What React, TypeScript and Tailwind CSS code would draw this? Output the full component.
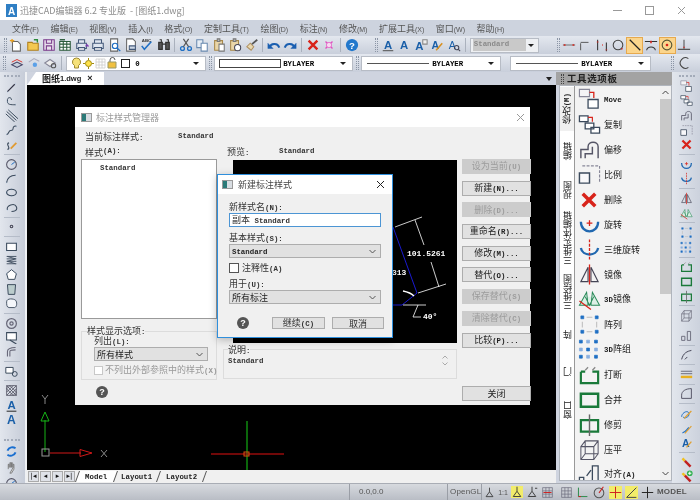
import React from "react";

const B = "#1f6fc4", R = "#d8231a", D = "#3b4a5c", G = "#1a7a3a";
const SANS = "font-['Liberation_Sans',sans-serif]";

function Tx({ s, sans }: { s: string; sans?: boolean }) {
  return (
    <>
      {s.split(/([\x00-\x7f]+)/).filter(Boolean).map((p, i) =>
        /^[\x00-\x7f]+$/.test(p) ? (
          <span key={i} className={sans ? "font-['Liberation_Sans',sans-serif] text-[7px]" : "font-['Liberation_Mono',monospace] text-[7.4px] font-bold whitespace-pre"}>{p}</span>
        ) : (
          <span key={i} className="font-['Noto_Sans_CJK_SC',sans-serif] text-[9px]">{p}</span>
        )
      )}
    </>
  );
}

function S({ size = 15, children }: { size?: number; children: React.ReactNode }) {
  return (
    <svg width={size} height={size} viewBox="0 0 16 16" fill="none" strokeWidth={1.2} className="shrink-0">
      {children}
    </svg>
  );
}
const P = ({ d, c = D, f = "none", w = 1.2, dash }: { d: string; c?: string; f?: string; w?: number; dash?: string }) => <path d={d} stroke={c} fill={f} strokeWidth={w} strokeDasharray={dash} />;
const AT = ({ x = 8, y = 13, s = 13, b = true }: { x?: number; y?: number; s?: number; b?: boolean }) => <text x={x} y={y} textAnchor="middle" fontSize={s} fill="#1a5fa8" fontWeight={b ? 700 : 400} fontFamily="Liberation Sans">A</text>;

const tb: Record<string, React.ReactNode> = {
  new: <><P d="M4 4h6l3 3v8H4z" c="#666" f="#fff" /><P d="M1 3h5M3.500 1v4" c="#e8a020" w={1.6} /></>,
  open: <><P d="M2 5h5l1 1h6v8H2z" c="#b08020" f="#f4c850" /><P d="M9 2l4 0v3" c="#2a8a3a" w={1.6} /></>,
  save: <><P d="M2 2h12v12H2z" c="#7a3a8a" f="#e8e0ec" /><P d="M5 2v4h6V2M5 14V9h6v5" c="#7a3a8a" /></>,
  table: <><P d="M2 4h12v10H2z" c="#2a5a3a" f="#fff" /><P d="M2 7h12M2 10.500h12M6 4v10M10 4v10" c="#2a5a3a" /><P d="M2 2h6" c="#2a5a3a" w={1.6} /></>,
  printp: <><P d="M4 2h7v4H4zM2 6h11v6H2z" c="#44597a" f="#dfe6f0" /><P d="M4 11h7v3H4z" c="#44597a" f="#fff" /><P d="M12 9h3l-2-2" c="#7a3ab0" w={1.4} /></>,
  print: <><P d="M4 2h8v4H4zM2 6h12v6H2z" c="#44597a" f="#dfe6f0" /><P d="M4 11h8v3H4z" c="#44597a" f="#fff" /></>,
  prev: <><P d="M3 1h8v14H3z" c="#666" f="#fff" /><circle cx="8" cy="9" r="3" stroke={B} strokeWidth="1.3" /><P d="M10 11l4 4" c={B} w={1.6} /></>,
  pub: <><P d="M3 1h7l3 3v11H3z" c="#666" f="#fff" /><P d="M6 9h7v4H6z" c="#44597a" f="#cdd8e6" /></>,
  abc: <><P d="M2 9l3 4 8-9" c={B} w={1.8} /><text x="2" y="5" fontSize="5" fill="#333" fontFamily="Liberation Sans" fontWeight="700">ABC</text></>,
  find: <><P d="M2 5h4v8H2zM10 5h4v8h-4zM6 7h4" c="#333" f="#555" w={1.4} /><P d="M3 2h2v3M11 2h2v3" c="#333" /></>,
  cut: <><circle cx="4" cy="12" r="2.200" stroke={B} strokeWidth="1.5" /><circle cx="12" cy="12" r="2.200" stroke={B} strokeWidth="1.500" /><P d="M5 10l6-9M11 10L5 1" c="#555" w={1.4} /></>,
  copy: <><P d="M2 2h7v9H2z" c="#6a8ab0" f="#e6edf5" /><P d="M7 6h7v9H7z" c="#6a8ab0" f="#fff" /></>,
  paste: <><P d="M3 3h9v11H3z" c="#a8884a" f="#ead6a8" /><P d="M6 1h3v3H6z" c="#777" f="#bbb" /><P d="M8 7h6v8H8z" c="#777" f="#fff" /></>,
  pastes: <><P d="M3 3h9v11H3z" c="#a8884a" f="#ead6a8" /><P d="M6 1h3v3H6z" c="#777" f="#bbb" /><circle cx="11" cy="11" r="3.500" fill="#fff" stroke="#445" /></>,
  brush: <><P d="M2 10l4-4 4 4-3 4z" c="#b09060" f="#e8d8b0" /><P d="M8 7l6-5" c="#555" w={2} /></>,
  undo: <><P d="M3 11c1-5 9-6 11 0" c="#1a5fb0" w={2.400} /><P d="M1 6v6h6z" c="#1a5fb0" f="#1a5fb0" w={.5} /></>,
  redo: <><P d="M13 11c-1-5-9-6-11 0" c="#1a5fb0" w={2.400} /><P d="M15 6v6H9z" c="#1a5fb0" f="#1a5fb0" w={.5} /></>,
  x: <P d="M3 3l10 10M13 3L3 13" c={R} w={2.800} />,
  xm: <><P d="M4 4l8 8M12 4l-8 8" c="#e050c0" w={1.6} /><circle cx="8" cy="8" r="3" fill="#f8d8f0" stroke="#e050c0" strokeWidth=".8" /></>,
  help: <><circle cx="8" cy="8" r="7" fill="#2278cc" /><text x="8" y="12" textAnchor="middle" fontSize="11" fill="#fff" fontWeight="700" fontFamily="Liberation Sans">?</text></>,
  a1: <><AT y={12} /><P d="M2 14.500h12" c="#555" /></>,
  a2: <AT />,
  a3: <><AT x={6} y={14} /><P d="M10 2h5v5h-5z" c="#888" f="#eee" /></>,
  a4: <><AT x={6} s={12} /><P d="M7 14l7-8" c="#d89020" w={1.8} /></>,
  a5: <><AT x={6} y={12} s={12} b={false} /><circle cx="11" cy="11" r="2.500" stroke="#445" /><P d="M13 13l2 2" c="#445" /></>,
  d1: <><P d="M1 8h14" c="#555" w={.9} /><P d="M2 8h2M12 8h2" c={R} w={1.600} /></>,
  d2: <P d="M3 14V6M3 5h9" c="#555" w={1.100} />,
  d3: <><P d="M3 2v12M13 5v10" c="#333" w={1.200} /><P d="M3 4v1M13 13v1M8 8h.8" c={R} w={1.800} /></>,
  d4: <><circle cx="8" cy="8" r="5.500" stroke="#444" strokeWidth="1.200" /><P d="M12 12l1 1" c={R} w={1.800} /></>,
  d5: <P d="M2 2l12 12" c="#222" w={1.400} />,
  d6: <><P d="M1 4h14M3 14c1-5 9-5 10 0" c="#333" /><P d="M8 3v3" c={R} w={1.800} /></>,
  d7: <><circle cx="8" cy="8" r="5.500" stroke="#553" strokeWidth="1.300" /><circle cx="8" cy="8" r="1.500" fill={R} /></>,
  d8: <><P d="M8 2v11M1 13h14" c="#555" /><P d="M8 10v1" c={R} w={1.800} /></>,
  l1: <><P d="M2 10l6-3 6 3-6 3z" c="#446" f="#c8d0dc" /><P d="M2 7l6-3 6 3" c={R} w={1} /></>,
  l2: <><P d="M2 7l6-4 6 3" c="#aab" /><circle cx="9" cy="10" r="2.500" fill="#5aa0e8" /></>,
  l3: <><P d="M2 8l6-4 6 4-6 4z" c="#889" f="#eee" /><circle cx="12" cy="11" r="2.500" stroke="#555" /></>,
  arc: <P d="M13 3a6 6 0 1 0 0 10" c="#444" w={1.200} />,
};

const lf: Record<string, React.ReactNode> = {
  line: <><P d="M3 13L12 4" c="#334" w={1.400} /><P d="M2.500 13.500h.1M12.500 3.500h.1" c={B} w={2.600} /></>,
  pl: <><P d="M3 8c-1-6 5-6 5-2M3 8c0 4 4 4 10 4" c={D} w={1.200} /><P d="M3 8h.1M13 12h.1" c={B} w={2.500} /></>,
  ml: <P d="M2 3l12 11M4 1l12 11M1 6l11 10" c={D} w={1.200} />,
  sp: <><P d="M2 13c3 0 2-5 5-5s3-1 3-3 3-3 4-2" c={D} w={1.300} /><P d="M2 13h.1M14 3h.1" c={B} w={2.400} /></>,
  skt: <><P d="M3 14c5-1-3-7 2-8" c={D} w={1.400} /><P d="M7 13l7-7" c="#e09a30" w={2.200} /></>,
  ci: <><circle cx="8" cy="8" r="6" stroke="#556" strokeWidth="1.300" /><P d="M8 8l4-3" c={B} w={1.200} /></>,
  ar: <><P d="M2 13c1-6 5-9 11-9" c={D} w={1.400} /><P d="M2 13h.1M13 4h.1" c={B} w={2.500} /></>,
  el: <><ellipse cx="8" cy="8" rx="6" ry="4" stroke={D} strokeWidth="1.400" /><P d="M8 4h.1M8 12h.1M2 8h.1" c={B} w={2.400} /></>,
  ea: <><P d="M3 11c-2-6 9-9 11-4s-3 6-6 6" c={D} w={1.300} /><P d="M3 11h.1" c={B} w={2.500} /></>,
  pt: <circle cx="8" cy="8" r="1.600" stroke="#445" strokeWidth="1.300" />,
  rc: <><P d="M2 4h12v9H2z" c={D} f="#fff" w={1.300} /><P d="M14 4h.1M2 13h.1" c={B} w={2.600} /></>,
  hl: <P d="M2 3h12M2 6h12M2 9h12M2 12h12M3 3l10 3M13 6L3 9M3 9l10 3" c={D} w={1.100} />,
  pg: <><P d="M8 2l6 5-2 7H4L2 7z" c={D} f="#fff" w={1.200} /><P d="M8 2h.1M14 7h.1M2 7h.1" c={B} w={2.400} /></>,
  hx: <P d="M3 2h10l-1 12H4z" c={D} f="#bcc" w={1.200} />,
  rg: <P d="M2 6c0-5 9-4 11-2s2 8-1 9H5C2 13 2 9 2 6z" c={D} f="#f4f6fa" w={1.100} />,
  dn: <><circle cx="8" cy="8" r="6" stroke="#667" strokeWidth="1.500" /><circle cx="8" cy="8" r="2" stroke="#667" strokeWidth="1.500" /></>,
  bx: <><P d="M2 2h12v9H2z" c={D} f="#fff" w={1.300} /><P d="M6 11l8 5" c={D} w={1.400} /></>,
  cv: <P d="M3 14V8c0-4 3-5 10-5M6 14V8c0-2 3-2 7-2" c="#667" w={1.300} />,
  vw: <><P d="M1 3h9v7H1z" c={D} f="#fff" /><circle cx="12" cy="11" r="3" stroke={D} /></>,
  ha: <P d="M2 2h12v12H2zM2 6l4-4M2 10l8-8M2 14L14 2M6 14l8-8M10 14l4-4M2 6l8 8M2 2l12 12M6 2l8 8" c="#445" w={.9} />,
  ta: <><AT y={12} s={14} /><P d="M2 15h12" c="#222" /></>,
  tb: <AT y={14} s={15} />,
  rf: <><P d="M3 7c2-5 7-5 10-3" c="#1a6fd0" w={2.400} /><P d="M13 9c-2 5-7 5-10 3" c="#1a6fd0" w={2.400} /></>,
  hd: <P d="M4 10V4h1v4M6 8V2h1v6M8 8V2h1v6M10 8V4h1v6l-3 5H6z" c="#666" f="#ddd" w={.9} />,
  re: <><P d="M1 1h7v5H1z" c="#889" f="#f4f4f6" w={.8} /><P d="M7 8h7v6H7z" c={D} f="#fff" w={.9} /><P d="M8 3h3v4" c={R} w={.9} /></>,
  co: <><P d="M1 2h6v4H1zM5 7h6v4H5zM9 10h6v4H9z" c={D} f="#fff" w={.9} /><P d="M7 3h3v3" c={R} w={.8} /></>,
  of: <P d="M2 14V8h5V6c0-4 7-4 7 0v8M5 14v-3h5V6" c="#556" w={1} />,
  sc: <><P d="M3 2h12v11" c="#889" w={.8} dash="2 1" /><P d="M1 7h7v7H1z" c={D} f="#f8f8fa" w={1} /></>,
  ro: <><P d="M2 6c0 9 12 9 12 0" c="#2068b0" w={1.600} /><P d="M8 5v4M6 7h4" c={R} w={.9} /></>,
  ro3: <><P d="M2 7c1 6 11 6 12 0" c="#2068b0" w={1.600} /><P d="M8 1v14" c={R} w={.9} dash="2 1" /></>,
  mi: <><P d="M7 3L2 13h5zM9 3l5 10H9z" c="#445" w={.8} /><P d="M8 1v14" c={R} w={.9} /></>,
  mi3: <><P d="M6 3L1 12h6zM10 3l5 9H9zM5 6l3 6 3-6" c="#2a8a5a" f="#dcefe5" w={.7} /><P d="M1 9l8 6" c={R} w={.9} /></>,
  aa: <><P d="M2 2h2v2H2zM12 2h2v2h-2zM2 12h2v2H2zM12 12h2v2h-2z" c={B} f={B} w={.5} /><P d="M6 3h4M3 6v4M13 6v4M6 13h4" c="#bbb" w={.7} /></>,
  a3d: <><P d="M1 1.500h2v2H1zM11.500 1.500h2v2h-2zM1 12h2v2H1zM11.500 12h2v2h-2zM6 7h2v2H6z" c={B} f={B} w={.5} /><P d="M6 1.500h2v2H6zM1 7h2v2H1zM11.500 7h2v2h-2zM6 12h2v2H6z" c="#8ab0e0" f="#8ab0e0" w={.5} /></>,
  br: <><P d="M2 6h3M10 6h4v8H2V6" c={G} w={1.500} /><P d="M5 5l2-2M10 5l2-2" c="#888" w={.9} /></>,
  jo: <P d="M2 4h12v9H2z" c={G} w={1.700} />,
  tr: <><P d="M2 5h12v8H2z" c={G} w={1.500} /><P d="M8 1v15" c="#666" w={1} /></>,
  ex: <P d="M2 6h9v9H2zM5 2h9v9H5zM2 6l3-4M11 6l3-4M2 15l3-4M11 15l3-4" c="#556" w={.7} />,
  da: <P d="M1 15v-5h3v5M10 15V2h4v13M6 9l3-4" c={D} w={.9} />,
  sl: <P d="M2 14V9h4v5zM9 14V3h4v11z" c="#667" w={1.100} />,
  fl: <P d="M2 14c2-8 7-10 12-11M6 14l3-3" c="#445" />,
  rl: <><P d="M1 4h14M1 7h14" c="#556" w={1} /><P d="M1 11h14" c="#e8b020" w={3} /></>,
  ar2: <P d="M2 14V10c0-5 5-8 12-8v12z" c="#556" w={1.200} />,
  ed1: <><P d="M2 12c0-5 8-9 9-4s-7 7-7 4" c={B} /><P d="M5 14L14 5" c="#e0a030" w={1.600} /></>,
  ed2: <><P d="M3 13c3 1 6-5 8-6" c={B} w={1.600} /><P d="M6 14l8-9" c="#e0a030" w={1.400} /></>,
  ed3: <><AT x={7} /><P d="M8 14l6-7" c="#e0a030" w={1.600} /></>,
  pe1: <><P d="M3 3l3 3" c="#f0c020" w={3} /><P d="M6 6l7 7" c="#c02020" w={3} /></>,
  pe2: <><P d="M3 4l3 3" c="#f0c020" w={3} /><P d="M6 7l7 7" c="#c02020" w={3} /><circle cx="12" cy="4" r="3.500" fill="#30b050" /><P d="M10 4h4M12 2v4" c="#fff" /></>,
  x: tb.x,
};

const Sep = () => <div className="h-[5px] flex items-center justify-center shrink-0"><div className="w-4 h-px bg-[#b5bcc8]" /></div>;
const VSep = ({ w = 6 }: { w?: number }) => <div style={{ width: w }} className="h-full flex items-center justify-center shrink-0"><div className="w-px h-3.5 bg-[#aab1bd]" /></div>;
const Grip = () => <div className="w-[3px] h-3.5 border-x border-dotted border-[#8b95a5] shrink-0" />;
const HGrip = () => <div className="h-[2px] w-4 mx-auto border-t-2 border-dotted border-[#a3abb9] shrink-0" />;

function Tb({ k, active }: { k: string; active?: boolean }) {
  return (
    <div className={"w-[16.4px] h-[17px] flex items-center justify-center shrink-0 " + (active ? "bg-[#fbd58c] border border-[#e6a94e]" : "")}>
      <S size={14}>{tb[k]}</S>
    </div>
  );
}

function VIcons({ items, h = 14.4, size = 13 }: { items: string[]; h?: number; size?: number }) {
  return (
    <>
      {items.map((k, i) =>
        k === "-" ? <Sep key={i} /> : k === "+" ? <div key={i} className="h-[5px] shrink-0" /> : (
          <div key={i} style={{ height: h }} className="flex items-center justify-center shrink-0">
            <S size={size}>{lf[k]}</S>
          </div>
        )
      )}
    </>
  );
}

function Combo({ w, children }: { w: string; children: React.ReactNode }) {
  return (
    <div className={w + " h-[15px] bg-white border border-[#b7bcc5] flex items-center px-1 shrink-0"}>
      <div className="flex-1 flex items-center min-w-0 overflow-hidden">{children}</div>
      <div className="w-0 h-0 border-x-[3px] border-x-transparent border-t-[3px] border-t-[#222] mr-[2px]" />
    </div>
  );
}

function LineCombo({ w }: { w: string }) {
  return (
    <Combo w={w}>
      <div className="w-[62px] h-px bg-[#555] mx-[1px] shrink-0" />
      <span className="ml-[2px]"><Tx s="BYLAYER" /></span>
    </Combo>
  );
}

const menu: [string, string][] = [["文件", "(F)"], ["编辑", "(E)"], ["视图", "(V)"], ["插入", "(I)"], ["格式", "(O)"], ["定制工具", "(T)"], ["绘图", "(D)"], ["标注", "(N)"], ["修改", "(M)"], ["扩展工具", "(X)"], ["窗口", "(W)"], ["帮助", "(H)"]];

function Btn({ label, dis }: { label: string; dis?: boolean }) {
  return (
    <div className={"w-[69px] h-[15px] flex items-center justify-center border shrink-0 " + (dis ? "bg-[#cccccc] border-[#cccccc] text-[#9c9c9c]" : "bg-[#e1e1e1] border-[#adadad] text-[#222]")}>
      <span><Tx s={label} /></span>
    </div>
  );
}

function Select({ text, w }: { text: string; w: string }) {
  return (
    <div className={w + " h-[14px] bg-[#e1e1e1] border border-[#adadad] flex items-center justify-between pl-[2px] pr-1 text-[#222] shrink-0"}>
      <span><Tx s={text} /></span>
      <svg width="7" height="5" viewBox="0 0 7 5"><path d="M.5 1l3 3 3-3" stroke="#555" fill="none" /></svg>
    </div>
  );
}

const DlgIcon = () => (
  <div className="w-[11px] h-[9px] border border-[#999] bg-[#d8dde2] flex shrink-0">
    <div className="w-[4px] h-full bg-[#2b7a78]" />
  </div>
);

const Help = () => (
  <div className={"w-3 h-3 rounded-full bg-[#555] text-white flex items-center justify-center font-bold text-[9px] " + SANS}>?</div>
);

function Preview() {
  return (
    <svg viewBox="233 160 224 183" className="w-[224px] h-[183px] bg-black shrink-0">
      <path d="M393 227L417 293M417 293L402 305H233" stroke="#1a1ad0" fill="none" strokeWidth="1" />
      <path d="M395 227L422 217M418 293L446 284M415 220L424 245M431 262L439 287M403 305H426M418 305L413 317H421" stroke="#fff" fill="none" strokeWidth=".8" />
      <path d="M403 291c5 1 8 2 11 5" stroke="#fff" fill="none" strokeWidth="1.400" />
      <text x="407" y="256" fill="#fff" fontSize="8" fontFamily="Liberation Mono" fontWeight="700">101.5261</text>
      <text x="392" y="275" fill="#fff" fontSize="8" fontFamily="Liberation Mono" fontWeight="700">313</text>
      <text x="423" y="319" fill="#fff" fontSize="8" fontFamily="Liberation Mono" fontWeight="700">40°</text>
    </svg>
  );
}

function ManagerDialog() {
  return (
    <div className="absolute left-[48px] top-[22px] w-[455px] h-[298px] bg-[#f0f0f0] flex flex-col text-[#333]">
      <div className="h-5 bg-white flex items-center pl-[6px] pr-[3px] shrink-0">
        <DlgIcon />
        <span className="ml-[4px] text-[#999]"><Tx s="标注样式管理器" /></span>
        <span className="ml-auto mr-[2px]"><svg width="9" height="9" viewBox="0 0 9 9"><path d="M1 1l7 7M8 1L1 8" stroke="#999" /></svg></span>
      </div>
      <div className="flex-1 flex pl-[6px] min-h-0">
        <div className="w-[136px] flex flex-col shrink-0">
          <div className="h-[10px] mt-[5px] pl-1 flex items-center shrink-0"><span className="w-[93px]"><Tx s="当前标注样式:" /></span><Tx s="Standard" /></div>
          <div className="h-[10px] mt-[5px] pl-1 flex items-center shrink-0"><Tx s="样式(A):" /></div>
          <div className="h-[160px] mt-[2px] bg-white border border-[#9a9a9a] pl-[18px] pt-[2px] shrink-0"><Tx s="Standard" /></div>
          <div className="relative mt-[12px] h-[49px] border border-[#dcdcdc] pl-3 pt-[4px] shrink-0">
            <span className="absolute -top-[6px] left-[5px] bg-[#f0f0f0]"><Tx s="样式显示选项:" /></span>
            <div className="h-[11px]"><Tx s="列出(L):" /></div>
            <Select text="所有样式" w="w-[114px]" />
            <div className="flex items-center gap-[2px] mt-[4px] text-[#999] whitespace-nowrap"><div className="w-[9px] h-[9px] bg-white border border-[#c8c8c8] shrink-0" /><span><Tx s="不列出外部参照中的样式(X)" /></span></div>
          </div>
          <div className="pl-[15px] mt-[6px]"><Help /></div>
        </div>
        <div className="w-[234px] ml-[6px] flex flex-col shrink-0">
          <div className="h-[10px] mt-[20px] pl-1 flex items-center shrink-0"><span className="w-[52px]"><Tx s="预览:" /></span><Tx s="Standard" /></div>
          <div className="pl-[10px] mt-[3px]"><Preview /></div>
          <div className="relative mt-[6px] h-[30px] border border-[#dcdcdc] pl-1 pt-[3px]">
            <span className="absolute -top-[5px] left-1 bg-[#f0f0f0]"><Tx s="说明:" /></span>
            <div className="mt-[2px]"><Tx s="Standard" /></div>
            <div className="absolute right-[8px] top-[5px] flex flex-col gap-[3px]">
              <svg width="6" height="4" viewBox="0 0 6 4"><path d="M.5 3.500L3 1l2.500 2.500" stroke="#aaa" fill="none" /></svg>
              <svg width="6" height="4" viewBox="0 0 6 4"><path d="M.5.5L3 3 5.500.5" stroke="#aaa" fill="none" /></svg>
            </div>
          </div>
        </div>
        <div className="w-[69px] ml-[5px] pt-[32px] flex flex-col shrink-0 gap-[6.700px]">
          <Btn label="设为当前(U)" dis />
          <Btn label="新建(N)..." />
          <Btn label="删除(D)..." dis />
          <Btn label="重命名(R)..." />
          <Btn label="修改(M)..." />
          <Btn label="替代(O)..." />
          <Btn label="保存替代(S)" dis />
          <Btn label="清除替代(C)" dis />
          <Btn label="比较(P)..." />
          <div className="mt-[32px]"><Btn label="关闭" /></div>
        </div>
      </div>
    </div>
  );
}

function NewDialog() {
  return (
    <div className="absolute left-[190px] top-[89px] w-[176px] h-[164px] bg-[#f0f0f0] border border-[#2f8fdc] flex flex-col text-[#333] shadow-[0_2px_8px_rgba(0,0,0,0.25)]">
      <div className="h-[19px] bg-white flex items-center pl-1 pr-[7px] shrink-0">
        <DlgIcon />
        <span className="ml-[5px] text-[#444]"><Tx s="新建标注样式" /></span>
        <svg className="ml-auto" width="9" height="9" viewBox="0 0 9 9"><path d="M1 1l7 7M8 1L1 8" stroke="#222" /></svg>
      </div>
      <div className="flex-1 flex flex-col px-[11px] pt-[8px] relative">
        <div className="h-[11px]"><Tx s="新样式名(N):" /></div>
        <div className="h-[14px] bg-white border border-[#4c95d4] flex items-center px-[2px] shrink-0"><span><Tx s="副本 Standard" /></span></div>
        <div className="h-[11px] mt-[6px]"><Tx s="基本样式(S):" /></div>
        <Select text="Standard" w="w-full" />
        <div className="flex items-center gap-[3px] mt-[5px] h-[10px]"><div className="w-[10px] h-[10px] bg-white border border-[#555]" /><span><Tx s="注释性(A)" /></span></div>
        <div className="h-[11px] mt-[6px]"><Tx s="用于(U):" /></div>
        <Select text="所有标注" w="w-full" />
        <div className="flex items-center mt-[13px]">
          <div className="ml-[8px]"><Help /></div>
          <div className="ml-[23px] w-[53px] h-[12px] bg-[#e1e1e1] border border-[#adadad] flex items-center justify-center shrink-0"><span><Tx s="继续(C)" /></span></div>
          <div className="ml-[7px] w-[52px] h-[12px] bg-[#e1e1e1] border border-[#adadad] flex items-center justify-center -mr-[5px] shrink-0"><span><Tx s="取消" /></span></div>
        </div>
      </div>
    </div>
  );
}

const palette: [string, string][] = [["re", "Move"], ["co", "复制"], ["of", "偏移"], ["sc", "比例"], ["x", "删除"], ["ro", "旋转"], ["ro3", "三维旋转"], ["mi", "镜像"], ["mi3", "3D镜像"], ["aa", "阵列"], ["a3d", "3D阵组"], ["br", "打断"], ["jo", "合并"], ["tr", "修剪"], ["ex", "压平"], ["da", "对齐(A)"]];
const vtabs: [string, string][] = [["修改(M)", "h-[44px] bg-[#f0f0f0]"], ["编辑", "h-[40px]"], ["视图", "h-[37px]"], ["三维实体编辑", "h-[60px]"], ["三维绘图", "h-[48px]"], ["阵", "h-[36px]"], ["门", "h-[38px]"], ["窗口", "h-[40px]"]];

export default function App() {
  return (
    <div className="w-[700px] h-[500px] flex flex-col bg-[#cfd4df] overflow-hidden text-[9px] leading-none font-['Noto_Sans_CJK_SC',sans-serif] blur-[0.35px]">
      {/* Title */}
      <div className="h-5 bg-white flex items-center shrink-0 pl-[6px]">
        <div className={"w-[11px] h-[13px] bg-[#2f7fc4] text-white font-bold text-[10px] flex items-end justify-center " + SANS}>A</div>
        <span className="ml-[3px] text-[9px] text-[#8c8c8c] whitespace-pre">迅捷CAD编辑器 6.2 专业版  - [图纸1.dwg]</span>
        <div className="ml-auto flex items-center gap-[23px] pr-[14px]">
          <div className="w-[9px] h-px bg-[#999]" />
          <div className="w-[9px] h-[9px] border border-[#999]" />
          <svg width="9" height="9" viewBox="0 0 9 9"><path d="M1 1l7 7M8 1L1 8" stroke="#999" /></svg>
        </div>
      </div>
      {/* Menu */}
      <div className="h-[16px] bg-[#cdd3de] flex items-center pl-[12px] gap-[11.500px] text-[#555] shrink-0">
        {menu.map(([a, b]) => <span key={a} className="whitespace-pre"><Tx s={a} /><Tx s={b} sans /></span>)}
      </div>
      {/* Toolbar 1 */}
      <div className="h-[18px] bg-gradient-to-b from-[#e4e8ef] to-[#c9cfdb] flex items-center pl-[4px] shrink-0">
        <Grip />
        <div className="w-[1px] shrink-0" />
        {["new", "open", "save", "table", "printp", "print", "prev", "pub", "abc", "find"].map(k => <Tb key={k} k={k} />)}
        <VSep />
        {["cut", "copy", "paste", "pastes", "brush"].map(k => <Tb key={k} k={k} />)}
        <VSep />
        {["undo", "redo"].map(k => <Tb key={k} k={k} />)}
        <VSep />
        {["x", "xm"].map(k => <Tb key={k} k={k} />)}
        <VSep />
        <Tb k="help" />
        <div className="w-[15px] shrink-0" />
        <Grip />
        <div className="w-[2px] shrink-0" />
        {["a1", "a2", "a3", "a4", "a5"].map(k => <Tb key={k} k={k} />)}
        <VSep w={8} />
        <div className="w-[69px] h-[15px] bg-[#eef0f3] border border-[#b7bcc5] flex items-center pl-[2px] pr-1 shrink-0">
          <div className="w-[53px] h-[12px] bg-[#c9c9c9] text-[#8a8a8a] flex items-center pl-[1px]"><Tx s="Standard" /></div>
          <div className="ml-auto w-0 h-0 border-x-[3px] border-x-transparent border-t-[3px] border-t-[#222]" />
        </div>
        <div className="w-[18px] shrink-0" />
        <Grip />
        <div className="w-[1px] shrink-0" />
        {["d1", "d2", "d3", "d4"].map(k => <Tb key={k} k={k} />)}
        <Tb k="d5" active />
        <Tb k="d6" />
        <Tb k="d7" active />
        <Tb k="d8" />
      </div>
      {/* Toolbar 2 */}
      <div className="h-[18px] bg-gradient-to-b from-[#e4e8ef] to-[#c9cfdb] flex items-center pl-[3px] shrink-0">
        <Grip />
        <div className="w-[3px] shrink-0" />
        {["l1", "l2", "l3"].map(k => <Tb key={k} k={k} />)}
        <VSep w={7} />
        <Combo w="w-[140px] ml-[1px]">
          <span className="flex items-center gap-[1px]">
            <svg width="11" height="13" viewBox="0 0 11 13"><path d="M5.500 1a4 4 0 0 1 2 7.500V11h-4V8.500A4 4 0 0 1 5.500 1z" fill="#f6e27a" stroke="#a08a30" /></svg>
            <svg width="11" height="11" viewBox="0 0 11 11"><circle cx="5.500" cy="5.500" r="3" fill="#ffe24a" stroke="#a08a10" /><path d="M5.500 0v2M5.500 9v2M0 5.500h2M9 5.500h2" stroke="#a08a10" /></svg>
            <svg width="11" height="11" viewBox="0 0 11 11"><path d="M1 1h9v9H1zM1 4h9M1 7h9M4 1v9M7 1v9" stroke="#ccc" fill="none" strokeWidth=".8" /></svg>
            <svg width="11" height="12" viewBox="0 0 11 12"><path d="M3 5V3a2.500 2.500 0 0 1 5 0" stroke="#555" fill="none" /><path d="M1 5h8v6H1z" fill="#f0c040" stroke="#996" /></svg>
            <div className="w-[9px] h-[9px] bg-white border border-[#222] ml-[2px]" />
            <span className="ml-[4px]"><Tx s="0" /></span>
          </span>
        </Combo>
        <div className="w-[3px] shrink-0" /><Grip /><div className="w-[2px] shrink-0" />
        <Combo w="w-[139px]">
          <div className="w-[62px] h-[9px] bg-white border border-[#444] shrink-0" />
          <span className="ml-[2px]"><Tx s="BYLAYER" /></span>
        </Combo>
        <div className="w-[3px] shrink-0" /><Grip /><div className="w-[2px] shrink-0" />
        <LineCombo w="w-[140px]" />
        <div className="w-[9px] shrink-0" />
        <LineCombo w="w-[141px]" />
        <div className="w-[20px] shrink-0" />
        <Grip />
        <div className="w-[2px] shrink-0" />
        <Tb k="arc" />
      </div>
      {/* Body */}
      <div className="flex-1 flex min-h-0">
        {/* Left toolbar */}
        <div className="w-[27px] shrink-0 flex flex-col pr-[2px] pt-[3px] bg-gradient-to-r from-[#e2e6ed] to-[#c6ccd8] border-r-2 border-r-[#eef0f3] overflow-hidden">
          <HGrip />
          <div className="h-[3px] shrink-0" />
          <VIcons items={["line", "pl", "ml", "sp", "skt", "-", "ci", "ar", "el", "ea", "-", "pt", "-", "rc", "hl", "pg", "hx", "rg", "-", "dn", "bx", "cv", "-", "vw", "-", "ha", "ta", "tb"]} />
          <div className="h-[12px] shrink-0" />
          <HGrip />
          <div className="h-[3px] shrink-0" />
          <VIcons items={["rf", "hd", "ci"]} h={16} />
        </div>
        {/* Center */}
        <div className="w-[529px] shrink-0 flex flex-col">
          <div className="h-[13px] flex items-end shrink-0 bg-[#cfd4df]">
            <svg width="9" height="13" viewBox="0 0 9 13" className="shrink-0"><path d="M0 13L9 0V13z" fill="#fff" /></svg>
            <div className="w-[68px] h-[13px] bg-white flex items-center pl-[6px] text-[#222]">
              <span className="text-[9px] font-bold">图纸</span>
              <span className={"text-[7.500px] font-bold " + SANS}>1.dwg</span>
              <span className={"ml-[6px] font-bold text-[9px] " + SANS}>×</span>
            </div>
            <div className="ml-auto mr-[4px] mb-[4px] w-0 h-0 border-x-[3.500px] border-x-transparent border-t-[4px] border-t-[#222]" />
          </div>
          <div className="flex-1 bg-black relative min-h-0">
            <svg viewBox="27 85 529 385" className="absolute inset-0 w-full h-full">
              <path d="M45 452V420" stroke="#16b316" strokeWidth="1" />
              <path d="M45 412l4 9h-8z" stroke="#16b316" fill="none" />
              <path d="M50 453H81" stroke="#d01818" strokeWidth="1" />
              <path d="M92 453l-12 3.500v-7z" stroke="#d01818" fill="none" />
              <rect x="42" y="449" width="7" height="7" stroke="#999" fill="none" />
              <path d="M42 395l3 4 3-4M45 399v5M101 450l6 7M107 450l-6 7" stroke="#aaa" fill="none" strokeWidth=".8" />
              <path d="M247 421V470" stroke="#0f8a0f" strokeWidth="1.500" />
              <path d="M211 454H284" stroke="#e01010" strokeWidth="1" />
              <rect x="244" y="452" width="5" height="4" stroke="#e05010" fill="none" />
            </svg>
            <ManagerDialog />
            <NewDialog />
          </div>
          <div className="h-[13px] bg-[#f0f0f0] flex items-center pl-[1px] shrink-0 text-[#222]">
            {["|◂", "◂", "▸", "▸|"].map(k => (
              <div key={k} className="w-[11px] h-[11px] mr-px bg-[#dfe2e8] border border-[#aaa] flex items-center justify-center text-[7px] font-['DejaVu_Sans',sans-serif] text-[#111]">{k}</div>
            ))}
            <div className="flex ml-[1px]">
              {[["Model", "w-[38px]"], ["Layout1", "w-[43px]"], ["Layout2", "w-[46px]"]].map(([t, w], i) => (
                <div key={t} className={w + " h-[11px] flex items-center justify-center border-l border-[#555] skew-x-[-20deg] " + (i === 0 ? "bg-white" : "")}>
                  <span className="skew-x-[20deg]"><Tx s={t} /></span>
                </div>
              ))}
              <div className="h-[11px] border-l border-[#555] skew-x-[-20deg]" />
            </div>
          </div>
        </div>
        {/* Palette */}
        <div className="w-[116px] shrink-0 flex flex-col pl-[3px] pb-[2px]">
          <div className="h-[13px] bg-[#a3a3a3] flex items-center gap-[3px] shrink-0 -ml-[3px] pl-[2px] pr-[2px]">
            <div className="w-[3px] h-2.5 border-x border-dotted border-[#444] ml-[3px]" />
            <span className="text-[9.500px] font-bold text-[#222] tracking-[0.6px]">工具选项板</span>
          </div>
          <div className="flex-1 flex min-h-0 bg-white border border-[#b0b5bd]">
            <div className="w-[15px] shrink-0 flex flex-col items-center pt-[1px] text-[#222] overflow-hidden border-r border-[#999]">
              {vtabs.map(([t, c]) => (
                <div key={t} className={c + " w-full flex items-center justify-center shrink-0"}>
                  <span className="[writing-mode:vertical-rl] rotate-180 whitespace-nowrap"><Tx s={t} /></span>
                </div>
              ))}
            </div>
            <div className="flex-1 bg-[#f3f3f3] flex flex-col min-w-0 overflow-hidden pt-px">
              {palette.map(([k, t]) => (
                <div key={t} className="h-[25px] flex items-center pl-[2px] shrink-0 text-[#222]">
                  <div className="w-[24px] flex justify-center shrink-0">
                    <S size={k === "x" ? 20 : 23}>{lf[k]}</S>
                  </div>
                  <span className="ml-[3px]"><Tx s={t} /></span>
                </div>
              ))}
            </div>
            <div className="w-[11px] shrink-0 flex flex-col bg-[#f0f0f0]">
              <div className="h-[13px] flex items-center justify-center shrink-0"><svg width="7" height="5" viewBox="0 0 7 5"><path d="M.5 4l3-3 3 3" stroke="#444" fill="none" /></svg></div>
              <div className="h-[195px] bg-[#c9c9c9] shrink-0" />
              <div className="flex-1" />
              <div className="h-[13px] flex items-center justify-center shrink-0"><svg width="7" height="5" viewBox="0 0 7 5"><path d="M.5 1l3 3 3-3" stroke="#444" fill="none" /></svg></div>
            </div>
          </div>
        </div>
        {/* Right toolbar */}
        <div className="flex-1 flex flex-col pt-[3px] pl-[1px] overflow-hidden bg-gradient-to-r from-[#e2e6ed] to-[#ccd2dd]">
          <HGrip />
          <div className="h-[2px] shrink-0" />
          <VIcons h={14.6} items={["re", "co", "of", "sc", "x", "-", "ro", "ro3", "-", "mi", "mi3", "-", "aa", "a3d", "-", "br", "jo", "tr", "-", "ex", "+", "sl", "-", "fl", "-", "rl", "-", "ar2", "-", "ed1", "ed2", "ed3", "-", "pe1", "pe2"]} />
        </div>
      </div>
      {/* Status */}
      <div className="h-[17px] bg-gradient-to-b from-[#d7dadf] to-[#b9bdc5] border-t border-t-[#a9adb5] flex items-center shrink-0 text-[#555]">
        <div className="w-[350px] h-full border-r border-[#9a9ea6] shrink-0" />
        <span className={"ml-[9px] w-[88px] text-[8px] shrink-0 " + SANS}>0.0,0.0</span>
        <div className="w-px h-full bg-[#9a9ea6] shrink-0" />
        <span className={"ml-[2px] text-[8px] tracking-[0.2px] w-[31px] shrink-0 " + SANS}>OpenGL</span>
        <div className="w-px h-full bg-[#9a9ea6] shrink-0" />
        <div className="flex items-center gap-[3px] ml-[2px] shrink-0">
          <S size={11}><P d="M8 1v6M8 7l-5 7h10z" c="#333" /></S>
          <span className={"text-[7px] w-[10px] text-center " + SANS}>1:1</span>
          <div className="bg-[#f2ec6a]"><S size={12}><P d="M8 1v6M8 7l-5 7h10z" c="#333" /></S></div>
          <S size={12}><P d="M8 1v6M8 7l-5 7h10zM12 3h3" c="#333" /></S>
          <S size={13}><P d="M2 2h12v12H2zM2 6h12M2 10h12M6 2v12M10 2v12" c="#667" w={.8} /><P d="M3 8h10" c="#d02020" /></S>
          <div className="ml-[3px]"><S size={13}><P d="M2 2h12v12H2zM2 6h12M2 10h12M6 2v12M10 2v12" c="#667" w={.8} /></S></div>
          <S size={13}><P d="M3 2v11h11" c="#2a8a4a" /><P d="M3 13h3" c="#d02020" /></S>
          <S size={14}><circle cx="8" cy="9" r="5.500" stroke="#555" /><P d="M8 9l5-7" c="#d02020" /></S>
          <div className="bg-[#f2ec6a]"><S size={13}><P d="M8 1v14M1 8h14" c="#d02020" /></S></div>
          <div className="bg-[#f2ec6a]"><S size={13}><P d="M2 14L14 2M2 14h12" c="#444" /></S></div>
          <S size={13}><P d="M8 1v14M1 8h14" c="#222" /></S>
        </div>
        <span className={"ml-[3px] text-[8px] font-bold tracking-[0.2px] " + SANS}>MODEL</span>
      </div>
    </div>
  );
}
